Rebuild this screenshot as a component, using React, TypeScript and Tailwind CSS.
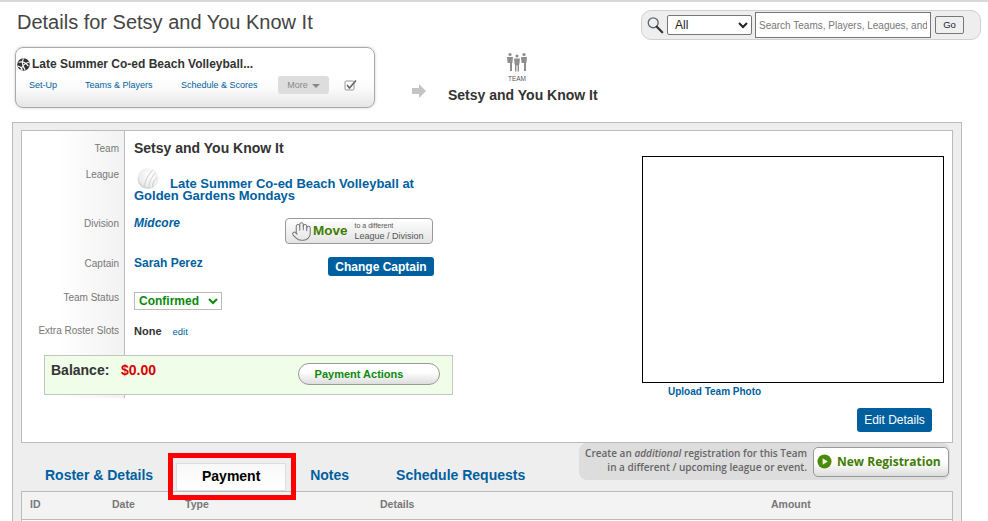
import { Hand } from "lucide-react";
import type { ReactNode } from "react";

const labelCell =
  "w-[103px] shrink-0 border-r border-[#bbb] bg-gradient-to-r from-white from-35% to-[#f2f2f2] pr-[5px] text-right text-[10px] leading-[12px] text-[#777]";

function Row({ label, height, children }: { label: string; height: string; children: ReactNode }) {
  return (
    <div className={`flex ${height}`}>
      <div className={`${labelCell} pt-[12px]`}>{label}</div>
      <div className="w-[310px] pl-[9px]">{children}</div>
    </div>
  );
}

function Volleyball({ className }: { className: string }) {
  return (
    <svg viewBox="0 0 24 24" className={className}>
      <defs>
        <radialGradient id="ball" cx="0.6" cy="0.35" r="0.75">
          <stop offset="0" stopColor="#ffffff" />
          <stop offset="0.7" stopColor="#ececec" />
          <stop offset="1" stopColor="#bdbdbd" />
        </radialGradient>
      </defs>
      <circle cx="12" cy="12" r="11.500" fill="url(#ball)" />
      <path d="M17 3c-4 4-8 10-9 18M20 6c-4 4-7 10-7 16M22 11c-3 2-5 6-5 10" fill="none" stroke="#c8c8c8" strokeWidth="1" />
    </svg>
  );
}

function TeamIcon() {
  return (
    <svg viewBox="0 0 22 20" className="h-[20px] w-[22px]" fill="#8e8e8e">
      <circle cx="4" cy="2.500" r="1.600" />
      <circle cx="11" cy="4" r="1.600" />
      <circle cx="18" cy="2.500" r="1.600" />
      <path d="M1 5h6l-.6 6H6v8H4v-8H1.600zM15 5h6l-.6 6H20v8h-2v-8h-2.400z" />
      <path d="M8 6.500h6l-.7 6H13v7h-1.400v-6h-1.200v6H9v-7h-.4z" />
    </svg>
  );
}

export default function App() {
  return (
    <div className="h-[521px] w-[988px] overflow-hidden border-t-2 border-[#d8d8d8] bg-white font-['Liberation_Sans',Arial,sans-serif] text-[#333]">
      {/* Page title and search */}
      <div className="flex h-[45px] items-start justify-between pl-[17px] pr-[7px]">
        <h1 className="mt-[7px] text-[20px] leading-[26px] text-[#444]">Details for Setsy and You Know It</h1>
        <div className="mt-[8px] flex h-[30px] w-[340px] items-center rounded-[10px] border border-[#d0d0d0] bg-[#eee] pl-[4px]">
          <svg viewBox="0 0 20 20" className="h-[18px] w-[18px] shrink-0">
            <circle cx="8" cy="7.500" r="5.500" fill="#e8f0f4" stroke="#666" strokeWidth="1.500" />
            <path d="M12 12l6 6" stroke="#333" strokeWidth="2.500" strokeLinecap="round" />
          </svg>
          <select className="ml-[3px] h-[20px] w-[85px] rounded-[2px] border border-[#767676] bg-white pl-[3px] text-[12px] text-[#222]">
            <option>All</option>
          </select>
          <input
            className="ml-[3px] h-[26px] w-[176px] border border-[#767676] bg-white px-[3px] text-[10px] placeholder:text-[#777]"
            placeholder="Search Teams, Players, Leagues, and more"
          />
          <button className="ml-[4px] h-[18px] w-[29px] rounded-[2px] border border-[#777] bg-[#efefef] text-[9.5px] text-[#222]">Go</button>
        </div>
      </div>

      {/* League card and breadcrumb target */}
      <div className="flex h-[75px] items-start pl-[15px]">
        <div className="h-[61px] w-[360px] rounded-[8px] border border-[#aaa] bg-gradient-to-b from-white from-50% via-[#fafafa] via-70% to-[#e6e6e6] shadow-[0_0_3px_#ccc]">
          <div className="mt-[9px] flex items-center pl-[1px] text-[12px] font-bold leading-[15px] text-[#333]">
            <svg viewBox="0 0 24 24" className="mr-[2px] h-[13px] w-[13px]">
              <circle cx="12" cy="12" r="11.500" fill="#333" />
              <path d="M3 8c6-2 13 0 18 7M12 1c-3 5-3 12 3 21M22 8c-5 1-12 6-15 14M2 15c4 1 7 3 8 8" fill="none" stroke="#fff" strokeWidth="2" />
            </svg>
            Late Summer Co-ed Beach Volleyball...
          </div>
          <div className="mt-[4px] flex h-[18px] items-center pl-[13px] text-[9px] text-[#00609f]">
            <span className="w-[56px] pt-[1px]">Set-Up</span>
            <span className="w-[96px] pt-[1px]">Teams &amp; Players</span>
            <span className="w-[97px] pt-[1px]">Schedule &amp; Scores</span>
            <span className="flex h-[18px] w-[51px] items-center justify-center gap-[4px] rounded-[3px] bg-[#ddd] pt-[1px] text-[#888]">
              More
              <span className="border-x-[4px] border-t-[4px] border-x-transparent border-t-[#888]" />
            </span>
            <svg viewBox="0 0 14 12" className="ml-[15px] h-[12px] w-[14px]" fill="none">
              <rect x="1" y="2" width="9" height="9" rx="1" stroke="#999" />
              <path d="M3 6l2.500 3L12 1.500" stroke="#666" strokeWidth="1.600" />
            </svg>
          </div>
        </div>
        <svg viewBox="0 0 16 16" className="ml-[36px] mt-[36px] h-[16px] w-[16px]" fill="#c4c4c4">
          <path d="M1 5h7V1l7 7-7 7v-4H1z" />
        </svg>
        <div className="ml-[21px] flex flex-col items-start pt-[5px]">
          <div className="ml-[58px] flex flex-col items-center">
            <TeamIcon />
            <span className="mt-[2px] text-[6.500px] leading-[10px] text-[#555]">TEAM</span>
          </div>
          <span className="mt-[3px] text-[14px] font-bold leading-[16px] text-[#333]">Setsy and You Know It</span>
        </div>
      </div>

      {/* Main panel */}
      <div className="ml-[12px] h-[420px] w-[950px] border border-[#bbb] bg-[#eee] px-[8px] pt-[7px]">
        <div className="flex h-[313px] border border-[#bbb] bg-white">
          <div className="w-[620px]">
            <Row label="Team" height="h-[32px]">
              <span className="block pt-[9px] text-[14px] font-bold leading-[16px]">Setsy and You Know It</span>
            </Row>
            <div className="flex h-[49px]">
              <div className={`${labelCell} pt-[6px]`}>League</div>
              <div className="w-[310px] pl-[9px] pt-[4px] text-[13px] font-bold leading-[12px] text-[#00609f]">
                <Volleyball className="ml-[3px] mr-[11px] inline-block h-[23px] w-[22px] align-[-2px]" />
                Late Summer Co-ed Beach Volleyball at
                <br />
                Golden Gardens Mondays
              </div>
            </div>
            <div className="flex h-[38px]">
              <div className={`${labelCell} pt-[6px]`}>Division</div>
              <div className="flex w-[308px] justify-between pl-[9px]">
                <span className="pt-[4px] text-[12px] font-bold italic leading-[15px] text-[#00609f]">Midcore</span>
                <button className="mt-[6px] flex h-[26px] w-[148px] items-center rounded-[4px] border border-[#999] bg-gradient-to-b from-white to-[#e4e4e4] pl-[5px]">
                  <Hand size={21} strokeWidth={1.2} color="#777" />
                  <span className="ml-[1px] text-[13.500px] font-bold text-[#3f7d00]">Move</span>
                  <span className="ml-[7px] text-left text-[9px] leading-[10px] text-[#555]">
                    <span className="block text-[7px]">to a different</span>
                    League / Division
                  </span>
                </button>
              </div>
            </div>
            <div className="flex h-[36px]">
              <div className={`${labelCell} pt-[8px]`}>Captain</div>
              <div className="flex w-[309px] justify-between pl-[9px]">
                <span className="pt-[6px] text-[12px] font-bold leading-[15px] text-[#00609f]">Sarah Perez</span>
                <button className="mt-[7px] h-[19px] w-[106px] rounded-[3px] bg-[#00609f] text-[12px] font-bold text-white">Change Captain</button>
              </div>
            </div>
            <div className="flex h-[34px]">
              <div className={`${labelCell} pt-[6px]`}>Team Status</div>
              <div className="pl-[9px] pt-[2px]">
                <select className="h-[18px] w-[88px] border border-[#bbb] bg-white text-[12px] font-bold text-[#0a8a0a]">
                  <option>Confirmed</option>
                </select>
              </div>
            </div>
            <div className="flex h-[35px]">
              <div className={`${labelCell} pt-[5px]`}>Extra Roster Slots</div>
              <div className="pl-[9px] pt-[4px] text-[11px] font-bold leading-[14px]">
                None
                <span className="ml-[11px] text-[9.500px] font-normal text-[#00609f]">edit</span>
              </div>
            </div>
            <div className="relative flex h-[43px]">
              <div className={labelCell} />
              <div className="absolute left-[22px] top-0 flex h-[40px] w-[409px] items-start justify-between border border-[#c4c4c4] bg-[#f0fde8] pl-[6px] pr-[12px]">
                <div className="flex pt-[6px] font-bold leading-[16px]">
                  <span className="w-[70px] text-[14px]">Balance:</span>
                  <span className="text-[14px] text-[#d90000]">$0.00</span>
                </div>
                <button className="mt-[7px] h-[22px] w-[142px] rounded-full border border-[#999] bg-gradient-to-b from-white from-40% to-[#ddd] pr-[20px] pt-[1px] text-[11px] font-bold text-[#0a8a0a]">
                  Payment Actions
                </button>
              </div>
            </div>
          </div>
          <div className="flex flex-col items-start pt-[25px]">
            <div className="h-[227px] w-[302px] border border-black bg-white" />
            <a className="ml-[26px] mt-[3px] text-[10px] font-bold leading-[12px] text-[#00609f]">Upload Team Photo</a>
            <button className="ml-[215px] mt-[10px] h-[24px] w-[75px] rounded-[3px] bg-[#00609f] text-[12px] text-white">Edit Details</button>
          </div>
        </div>

        {/* Tabs and new registration */}
        <div className="flex h-[48px] items-start justify-between">
          <div className="relative flex items-start pt-[20px] text-[14px] font-bold leading-[24px] text-[#00609f]">
            <span className="ml-[24px] mr-[23px]">Roster &amp; Details</span>
            <span className="flex h-[28px] w-[110px] items-center justify-center border border-[#ddd] bg-gradient-to-b from-[#f8f8f8] to-white pb-[2px] text-black">Payment</span>
            <span className="ml-[24px]">Notes</span>
            <span className="ml-[47px]">Schedule Requests</span>
            <div className="absolute left-[147px] top-[10px] h-[47px] w-[128px] border-[5px] border-[#f00]" />
          </div>
          <div className="mr-[3px] flex h-[37px] w-[371px] items-center justify-end rounded-[8px] bg-[#ddd] pr-[1px] font-['Open_Sans',sans-serif] text-[10px] font-semibold leading-[14px] text-[#666]">
            <div className="mr-[6px] pb-[3px] text-right">
              Create an <em>additional</em> registration for this Team
              <br />
              in a different / upcoming league or event.
            </div>
            <button className="flex h-[30px] w-[136px] items-center gap-[5px] rounded-[5px] border border-[#999] bg-gradient-to-b from-white from-50% to-[#ddd] pl-[3px] text-[12px] font-bold text-[#3f7d00]">
              <svg viewBox="0 0 16 16" className="h-[15px] w-[15px]">
                <circle cx="8" cy="8" r="7.500" fill="#4a8c0a" />
                <path d="M6 4.500v7l5.500-3.500z" fill="#eef5e0" />
              </svg>
              New Registration
            </button>
          </div>
        </div>

        {/* Payments table header */}
        <div className="flex h-[29px] items-center border border-[#bbb] bg-[#f3f3f3] pb-[2px] text-[10.500px] font-bold text-[#777]">
          <span className="ml-[8px] w-[82px]">ID</span>
          <span className="w-[73px]">Date</span>
          <span className="w-[195px]">Type</span>
          <span className="w-[391px]">Details</span>
          <span>Amount</span>
        </div>
        <div className="h-[10px] border-x border-[#bbb] bg-white" />
      </div>
    </div>
  );
}
